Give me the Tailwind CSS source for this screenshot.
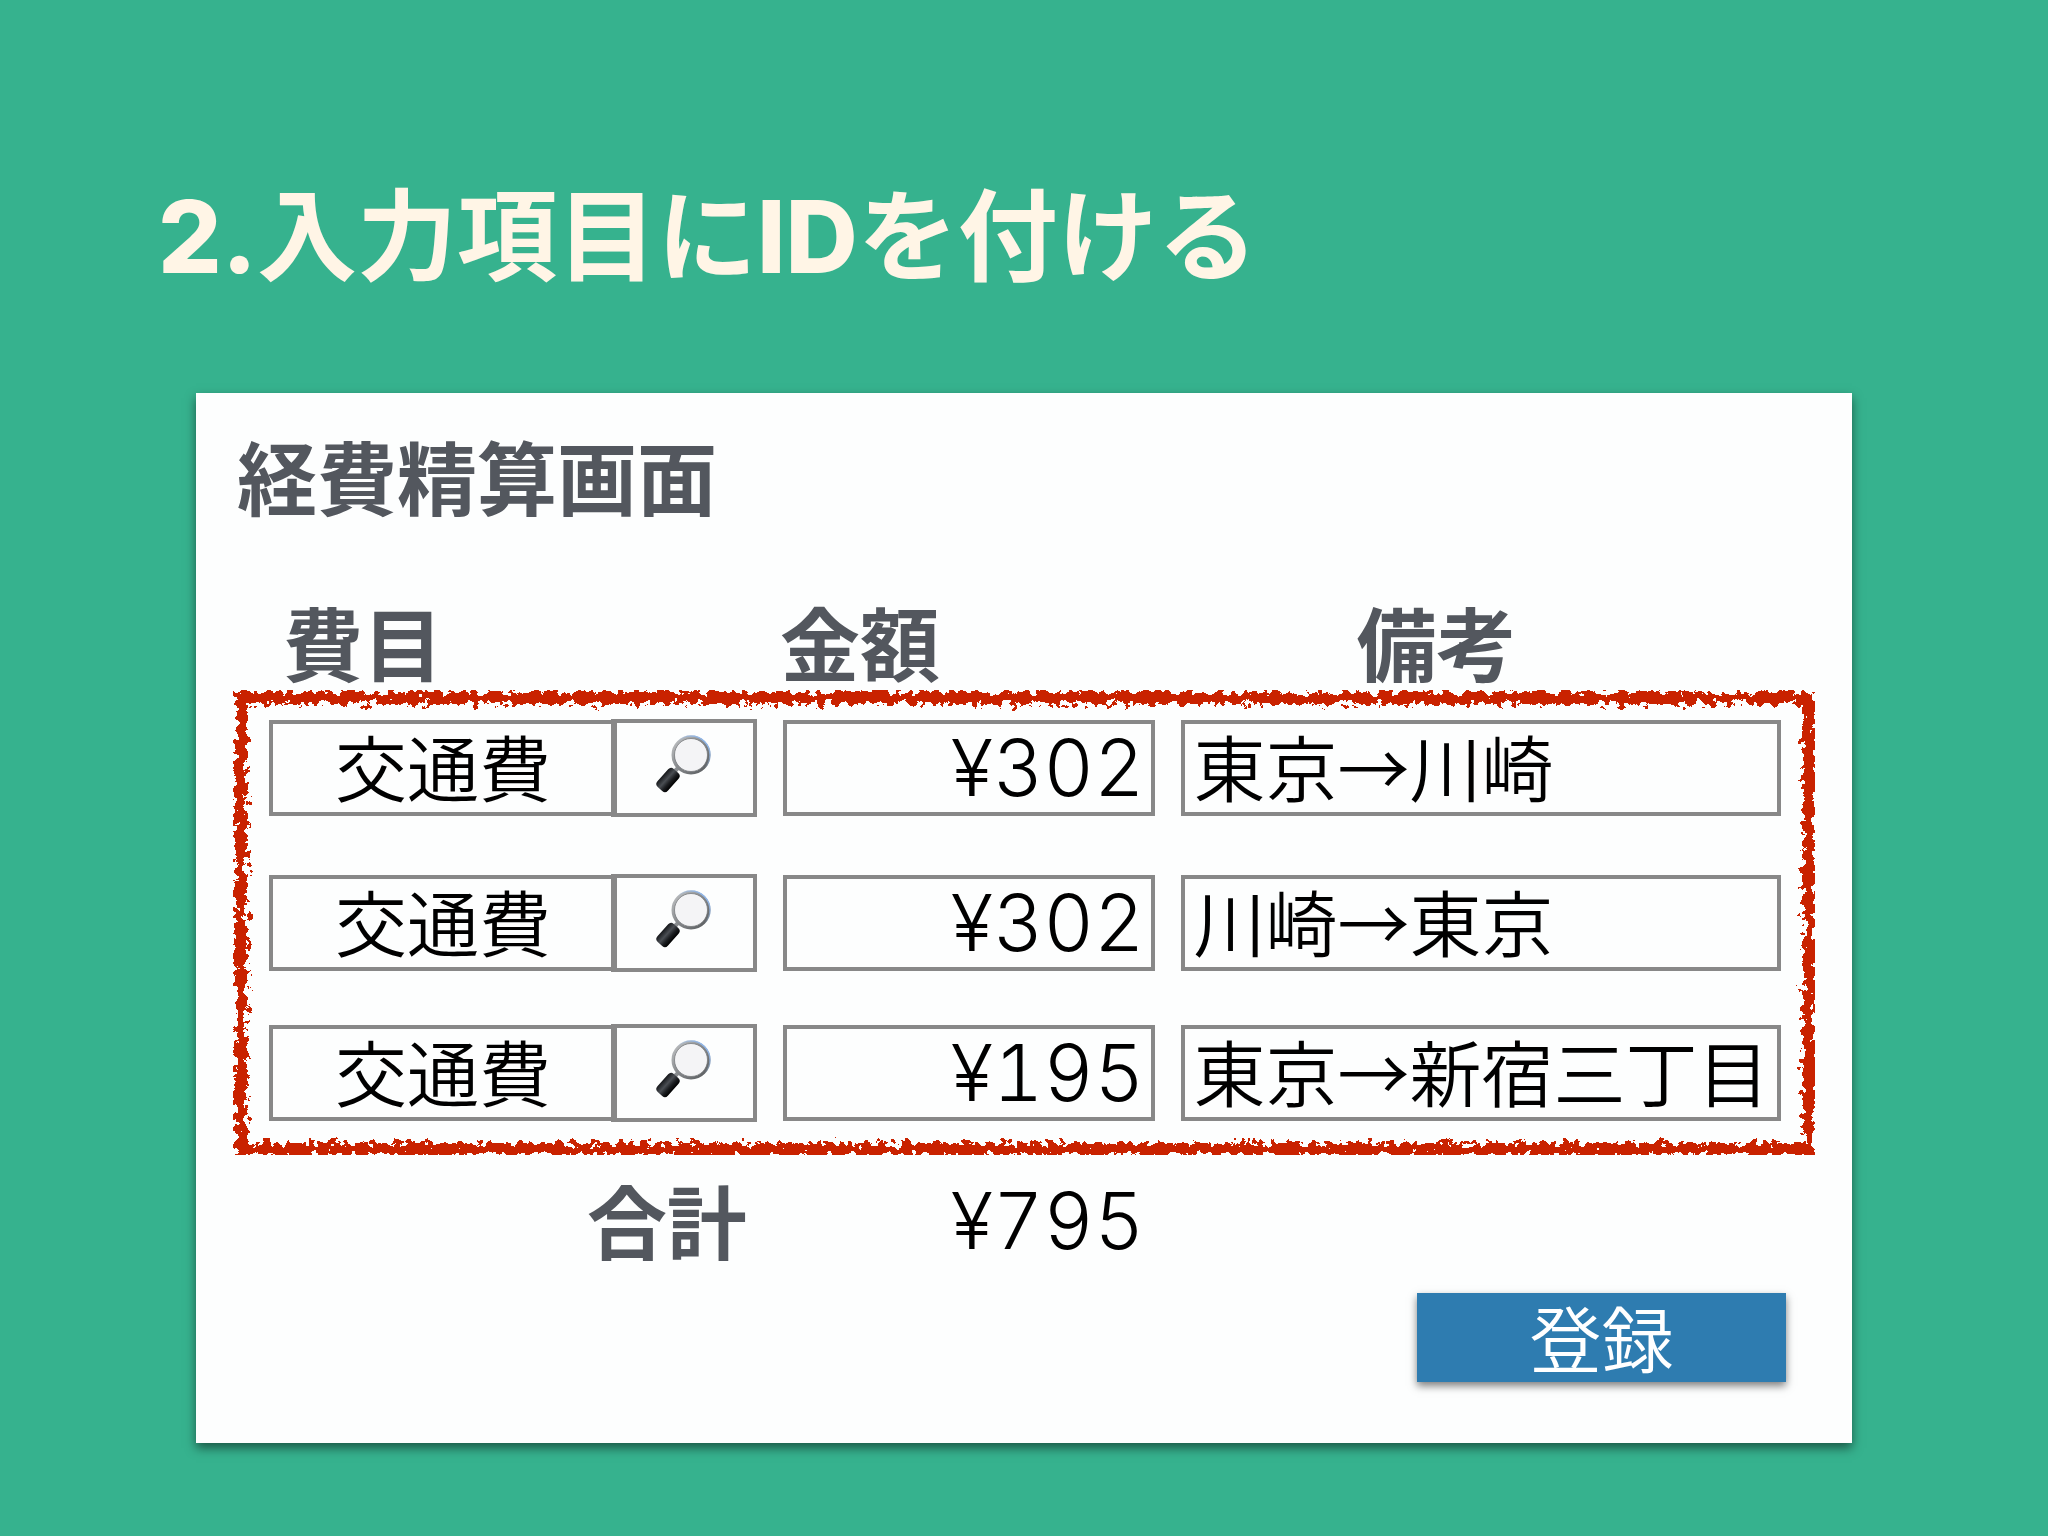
<!DOCTYPE html>
<html lang="ja">
<head>
  <meta charset="UTF-8" />
  <meta name="viewport" content="width=device-width, initial-scale=1.0"/>
  <title>経費精算画面</title>
  <script src="https://cdn.jsdelivr.net/npm/@tailwindcss/browser@4"></script>
</head>
<body class="bg-[#36b28e] min-h-screen pt-[162px] px-[196px] pb-[93px] font-['Noto_Sans_CJK_JP',sans-serif] text-black">
  <h1 class="-ml-[38px] mb-[81px] text-[100px] leading-[150px] font-bold text-[#fff5e6] font-['Inter','Noto_Sans_CJK_JP',sans-serif] whitespace-nowrap"><span class="font-extrabold">2.</span>入力項目に<span class="font-extrabold">ID</span>を付ける</h1>

  <main class="bg-[#fdfefe] px-[37px] pt-[21px] pb-[61px] shadow-[0_5px_10px_rgba(0,0,0,0.5)]">
    <h2 class="ml-1 text-[80px] leading-[120px] font-bold text-[#53575e]">経費精算画面</h2>

    <form id="form-keihi">
      <table class="w-full table-fixed mt-[56px]">
        <thead class="text-[80px] leading-[100px] font-bold text-[#53575e] text-left">
          <tr>
            <th class="w-[34%] p-0 pl-[50px]">費目</th>
            <th class="w-[25%] p-0 pl-[9px]">金額</th>
            <th class="w-[41%] p-0 pl-[190px]">備考</th>
          </tr>
        </thead>
        <tbody id="meisai" class="relative text-[72px] font-[350]"></tbody>
        <tfoot>
          <tr>
            <th class="p-0 pt-[3px] pb-[5px] pr-[24px] text-right text-[80px] leading-[120px] font-bold text-[#53575e]">合計</th>
            <td class="p-0 pt-[6px] pb-[2px] pr-[22px] text-right text-[78px] leading-[120px] font-light tabular-nums font-['Inter',sans-serif]">¥795</td>
            <td></td>
          </tr>
        </tfoot>
      </table>

      <div class="flex justify-end pr-[29px] mt-[10px]">
        <button type="submit" class="w-[369px] h-[89px] pb-1 bg-[#2e7cb0] text-white text-[72px] leading-[85px] font-[350] shadow-[0_4px_8px_rgba(0,0,0,0.5)]">登録</button>
      </div>
    </form>
  </main>

  <svg class="absolute size-0" aria-hidden="true">
    <defs>
      <linearGradient id="rim" x1="0" y1="0" x2="1" y2="1">
        <stop offset="0" stop-color="#c4c6c8"/>
        <stop offset="0.45" stop-color="#8a8d90"/>
        <stop offset="1" stop-color="#55585b"/>
      </linearGradient>
      <linearGradient id="shine" x1="0" y1="1" x2="1" y2="0">
        <stop offset="0.5" stop-color="#a9c8ee" stop-opacity="0"/>
        <stop offset="0.85" stop-color="#8fb6ea"/>
      </linearGradient>
      <linearGradient id="grip" x1="0" y1="0" x2="1" y2="0">
        <stop offset="0" stop-color="#15171a"/>
        <stop offset="0.4" stop-color="#4a4e53"/>
        <stop offset="0.7" stop-color="#1b1d20"/>
        <stop offset="1" stop-color="#000"/>
      </linearGradient>
      <symbol id="loupe" viewBox="0 0 60 60">
        <path d="M19 40l5-5" stroke="#8b8e91" stroke-width="4"/>
        <rect x="7" y="35" width="14" height="24" rx="4" fill="url(#grip)" transform="rotate(42 14 47)"/>
        <circle cx="37" cy="22" r="18" fill="#f4f4f6" stroke="url(#rim)" stroke-width="3"/>
        <circle cx="37" cy="22" r="19" fill="none" stroke="url(#shine)" stroke-width="1.5"/>
        <circle cx="37" cy="22" r="16.5" fill="none" stroke="#6d7073" stroke-width="0.7"/>
      </symbol>
      <!-- チョーク風の線 -->
      <filter id="chalk" filterUnits="userSpaceOnUse" x="-10" y="-10" width="3000" height="2000">
        <feTurbulence type="fractalNoise" baseFrequency="0.13" numOctaves="4" seed="4" result="n"/>
        <feDisplacementMap in="SourceGraphic" in2="n" scale="19" xChannelSelector="R" yChannelSelector="G"/>
      </filter>
    </defs>
  </svg>

  <script>
    const meisai = [
      { himoku: '交通費', kingaku: '¥302', biko: '東京→川崎', height: 'h-[155px]' },
      { himoku: '交通費', kingaku: '¥302', biko: '川崎→東京', height: 'h-[150px]' },
      { himoku: '交通費', kingaku: '¥195', biko: '東京→新宿三丁目', height: 'h-[160px]' },
    ];

    const waku = `
      <svg class="absolute inset-0 size-full pointer-events-none" aria-hidden="true">
        <rect x="8" y="8" class="w-[calc(100%-14px)] h-[calc(100%-14px)]" fill="none" stroke="#c92400" stroke-width="12" filter="url(#chalk)"/>
      </svg>`;

    document.getElementById('meisai').innerHTML = meisai.map((m, i) => `
      <tr class="${m.height} align-top">
        <td class="p-0 pt-[30px] pl-[36px] pr-[14px]">
          <div class="flex items-center h-[96px]">
            <input type="text" aria-label="費目 ${i + 1}" value="${m.himoku}" class="flex-1 min-w-0 h-[96px] pl-[2px] pb-[6px] border-4 border-r-0 border-[#888] text-center" />
            <button type="button" aria-label="費目を検索 ${i + 1}" class="w-[146px] h-[98px] pb-[10px] pr-[2px] border-4 border-l-6 border-[#888] flex items-center justify-center">
              <svg class="size-[60px]"><use href="#loupe"/></svg>
            </button>
          </div>
        </td>
        <td class="p-0 pt-[30px] pl-[12px] pr-[11px]">
          <input type="text" aria-label="金額 ${i + 1}" value="${m.kingaku}" class="block w-full h-[96px] px-[7px] pb-[2px] border-4 border-[#888] text-right text-[78px] font-light tabular-nums font-['Inter',sans-serif]" />
        </td>
        <td class="p-0 pt-[30px] pl-[15px] pr-[34px]">
          <input type="text" aria-label="備考 ${i + 1}" value="${m.biko}" class="block w-full h-[96px] px-[8px] pb-[6px] border-4 border-[#888]" />
          ${i === 0 ? waku : ''}
        </td>
      </tr>`).join('');

    document.getElementById('form-keihi').addEventListener('submit', e => e.preventDefault());
  </script>
</body>
</html>
